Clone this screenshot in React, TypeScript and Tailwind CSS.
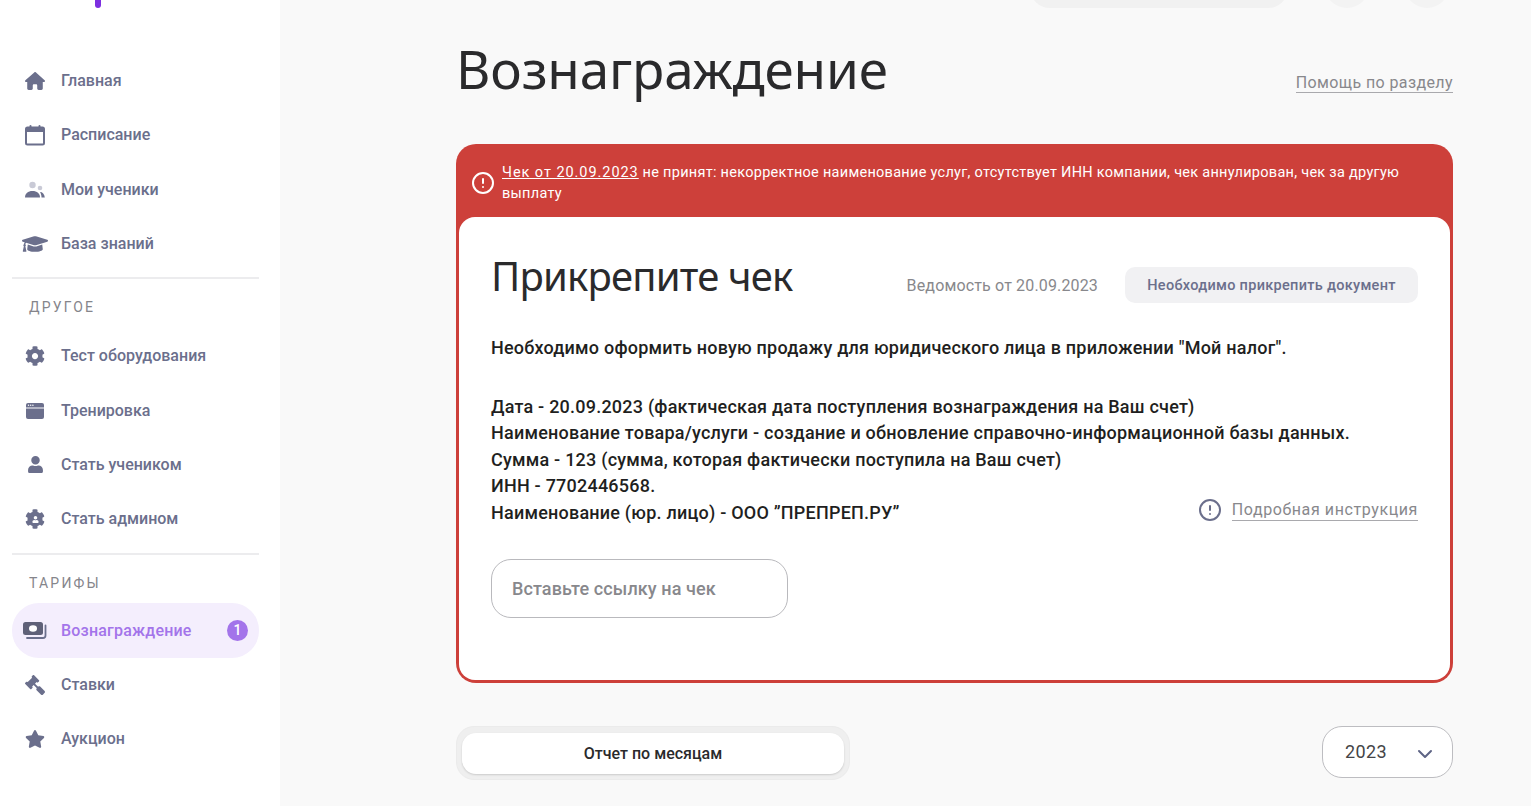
import React from "react";
import { FaGraduationCap, FaCog, FaUser, FaGavel, FaStar } from "react-icons/fa";
import { FaHouse } from "react-icons/fa6";
import { CircleAlert, ChevronDown } from "lucide-react";

const body = "font-['Roboto','Liberation_Sans',sans-serif]";
const head = "font-['Noto_Sans','Liberation_Sans',sans-serif]";

const CalendarIcon = () => (
  <svg viewBox="0 0 22 22" className="w-[22px] h-[22px]" fill="none">
    <rect x="2" y="3.5" width="18" height="17" rx="1.5" stroke="#6b6f8c" strokeWidth="2" />
    <rect x="2" y="3.5" width="18" height="4.5" fill="#6b6f8c" />
    <rect x="5.5" y="1" width="2" height="4" rx="1" fill="#6b6f8c" />
    <rect x="14.5" y="1" width="2" height="4" rx="1" fill="#6b6f8c" />
  </svg>
);
const StudentsIcon = () => (
  <svg viewBox="0 0 22 18" className="w-[22px] h-[18px]">
    <circle cx="8.5" cy="4" r="3.2" fill="#c9cad6" />
    <circle cx="16" cy="7" r="2.3" fill="#c9cad6" />
    <path d="M1 16.5c0-4 3-6.5 7.5-6.5s7.5 2.5 7.5 6.5z" fill="#6b6f8c" />
    <path d="M16 11c2.5 0 4.500 2 4.800 5.500h-3.300c0-2-.5-3.800-1.500-5.500z" fill="#6b6f8c" />
  </svg>
);
const WindowIcon = () => (
  <svg viewBox="0 0 18 16" className="w-[18px] h-[16px]">
    <path d="M2 0h14a2 2 0 0 1 2 2v2.500H0V2a2 2 0 0 1 2-2z" fill="#6b6f8c" />
    <circle cx="2.500" cy="2.200" r=".7" fill="#fff" />
    <circle cx="4.700" cy="2.200" r=".7" fill="#fff" />
    <circle cx="6.900" cy="2.200" r=".7" fill="#fff" />
    <path d="M0 5.500h18V14a2 2 0 0 1-2 2H2a2 2 0 0 1-2-2z" fill="#6b6f8c" />
  </svg>
);
const AdminIcon = () => (
  <div className="relative flex items-center justify-center">
    <FaCog size={20} color="#6b6f8c" />
    <div className="absolute w-[9px] h-[9px] rounded-full bg-[#6b6f8c]" />
    <FaUser size={7} color="#ffffff" className="absolute" />
  </div>
);
const MoneyIcon = () => (
  <svg viewBox="0 0 24 18" className="w-[24px] h-[18px]">
    <rect x="0" y="0" width="20" height="13" rx="2.500" fill="#5f6178" />
    <ellipse cx="10" cy="6.500" rx="4" ry="3.300" fill="#fff" />
    <path d="M22.500 3.500v10a2.500 2.500 0 0 1-2.500 2.500H4" fill="none" stroke="#6b6f8c" strokeWidth="1.800" strokeLinecap="round" />
  </svg>
);

function NavItem({ icon, label, active, badge }: { icon: React.ReactNode; label: string; active?: boolean; badge?: string }) {
  return (
    <div className={`h-[54.3px] flex items-center rounded-[27px] ${active ? "bg-[#f4eefd]" : ""}`}>
      <div className="w-[46px] flex justify-center shrink-0">{icon}</div>
      <span className={`ml-[3px] text-[16px] font-medium ${active ? "text-[#a374ea] tracking-[0.2px]" : "text-[#6b6f8c]"}`}>{label}</span>
      {badge && (
        <span className="ml-auto mr-[11px] w-[21px] h-[21px] rounded-full bg-[#a374ea] text-white text-[14px] font-medium flex items-center justify-center">{badge}</span>
      )}
    </div>
  );
}

const Section = ({ children }: { children: string }) => (
  <div className="h-[56px] pl-[17px] flex items-center text-[14px] tracking-[2.200px] text-[#85858b]">{children}</div>
);

export default function App() {
  return (
    <div className={`flex h-[806px] w-[1531px] overflow-hidden bg-[#f9f9f9] ${body}`}>
      <aside className="w-[280px] shrink-0 bg-white pl-[12px] pr-[21px]">
        <div className="ml-[83px] w-[6px] h-[8px] rounded-b-full bg-[#7c2fe0]" />
        <div className="mt-[46px]">
          <NavItem icon={<FaHouse size={20} color="#6b6f8c" />} label="Главная" />
          <NavItem icon={<CalendarIcon />} label="Расписание" />
          <NavItem icon={<StudentsIcon />} label="Мои ученики" />
          <NavItem icon={<FaGraduationCap size={26} color="#6b6f8c" />} label="База знаний" />
        </div>
        <div className="h-[2px] bg-[#ececee] mt-[6px]" />
        <Section>ДРУГОЕ</Section>
        <div className="-mt-[6px]">
          <NavItem icon={<FaCog size={20} color="#6b6f8c" />} label="Тест оборудования" />
          <NavItem icon={<WindowIcon />} label="Тренировка" />
          <NavItem icon={<FaUser size={17} color="#6b6f8c" />} label="Стать учеником" />
          <NavItem icon={<AdminIcon />} label="Стать админом" />
        </div>
        <div className="h-[2px] bg-[#ececee] mt-[7px]" />
        <Section>ТАРИФЫ</Section>
        <div className="-mt-[8px]">
          <NavItem active badge="1" icon={<MoneyIcon />} label="Вознаграждение" />
          <NavItem icon={<FaGavel size={20} color="#6b6f8c" className="-scale-x-100" />} label="Ставки" />
          <NavItem icon={<FaStar size={20} color="#6b6f8c" />} label="Аукцион" />
        </div>
      </aside>

      <main className="flex-1 pl-[176px] pr-[78px]">
        <div className="h-[8px] flex items-end justify-end overflow-hidden pr-[4px]">
          <div className="w-[258px] h-[40px] shrink-0 rounded-[20px] bg-[#f1f1f1] mr-[37px]" />
          <div className="w-[44px] h-[44px] shrink-0 rounded-full bg-[#f3f3f3] mr-[36px]" />
          <div className="w-[44px] h-[44px] shrink-0 rounded-full bg-[#f3f3f3]" />
        </div>

        <div className="h-[136px] flex items-start justify-between">
          <h1 className={`mt-[19px] text-[53px] leading-[84px] font-normal tracking-[-0.15px] text-[#2a2a2c] ${head}`}>Вознаграждение</h1>
          <a className="mt-[65px] text-[16px] leading-[19px] tracking-[0.4px] text-[#88888c] border-b border-[#a9a9ad]">Помощь по разделу</a>
        </div>

        <section className="h-[539px] rounded-[20px] bg-[#cd403a] p-[3px] pt-0 flex flex-col">
          <div className="h-[73px] shrink-0 flex items-center pl-[12px] pr-[40px] pt-[4px] gap-[7px] text-white text-[14.500px] leading-[21px] tracking-[0.28px]">
            <CircleAlert size={24} strokeWidth={2} className="shrink-0" />
            <p><span className="underline tracking-[0.95px]">Чек от 20.09.2023</span> не принят: некорректное наименование услуг, отсутствует ИНН компании, чек аннулирован, чек за другую выплату</p>
          </div>
          <div className="flex-1 rounded-[16px] bg-white pl-[32px] pr-[32px] flex flex-col">
            <div className="mt-[33px] flex items-start h-[54px]">
              <h2 className={`-mt-[1px] text-[40px] leading-[54px] font-normal text-[#2a2a2c] tracking-[-0.8px] ${head}`}>Прикрепите чек</h2>
              <span className="ml-auto mt-[17px] h-[36px] flex items-center pt-[1px] text-[16px] text-[#88888c] tracking-[0.15px]">Ведомость от 20.09.2023</span>
              <span className="ml-[27px] mt-[17px] w-[293px] h-[36px] rounded-[10px] bg-[#f1f1f3] flex items-center justify-center pt-[1px] text-[14.500px] tracking-[0.3px] font-medium text-[#6b6f8c]">Необходимо прикрепить документ</span>
            </div>
            <div className="mt-[31px] text-[18px] leading-[26.600px] font-medium tracking-[0.22px] text-[#1f1f21]">
              <p>Необходимо оформить новую продажу для юридического лица в приложении "Мой налог".</p>
              <div className="mt-[32px]">
                <p>Дата - 20.09.2023 (фактическая дата поступления вознаграждения на Ваш счет)</p>
                <p>Наименование товара/услуги - создание и обновление справочно-информационной базы данных.</p>
                <p>Сумма - 123 (сумма, которая фактически поступила на Ваш счет)</p>
                <p>ИНН - 7702446568.</p>
                <div className="flex justify-between items-center">
                  <p>Наименование (юр. лицо) - ООО ”ПРЕПРЕП.РУ”</p>
                  <div className="flex items-center gap-[10px] shrink-0 -mt-[7px]">
                    <CircleAlert size={24} strokeWidth={2} color="#6b6f8c" />
                    <a className="text-[16px] leading-[21px] tracking-[0.6px] font-normal text-[#88888c] border-b border-[#a9a9ad] whitespace-nowrap">Подробная инструкция</a>
                  </div>
                </div>
              </div>
            </div>
            <input placeholder="Вставьте ссылку на чек" className="mt-[32px] w-[297px] h-[59px] rounded-[20px] border border-[#b9b9bd] bg-white px-[20px] text-[18px] font-medium tracking-[0.1px] outline-none placeholder:text-[#88888c]" />
          </div>
        </section>

        <div className="mt-[43px] flex items-start justify-between">
          <div className="w-[394px] h-[54px] rounded-[18px] bg-[#efefef] border border-[#ebebeb] flex items-center justify-center">
            <button className="w-[382px] h-[41px] pt-[1px] rounded-[14px] bg-white shadow-[0_1px_2px_rgba(0,0,0,0.15)] text-[16px] font-medium text-[#2a2a2c]">Отчет по месяцам</button>
          </div>
          <div className="w-[131px] h-[52px] rounded-[20px] bg-white border border-[#bdbdc1] flex items-center justify-between pl-[22px] pr-[15px]">
            <span className="text-[18px] -mt-[2px] font-normal text-[#444446] tracking-[0.4px]">2023</span>
            <ChevronDown size={24} color="#5e6485" strokeWidth={2} className="mt-[3px]" />
          </div>
        </div>
      </main>
    </div>
  );
}
